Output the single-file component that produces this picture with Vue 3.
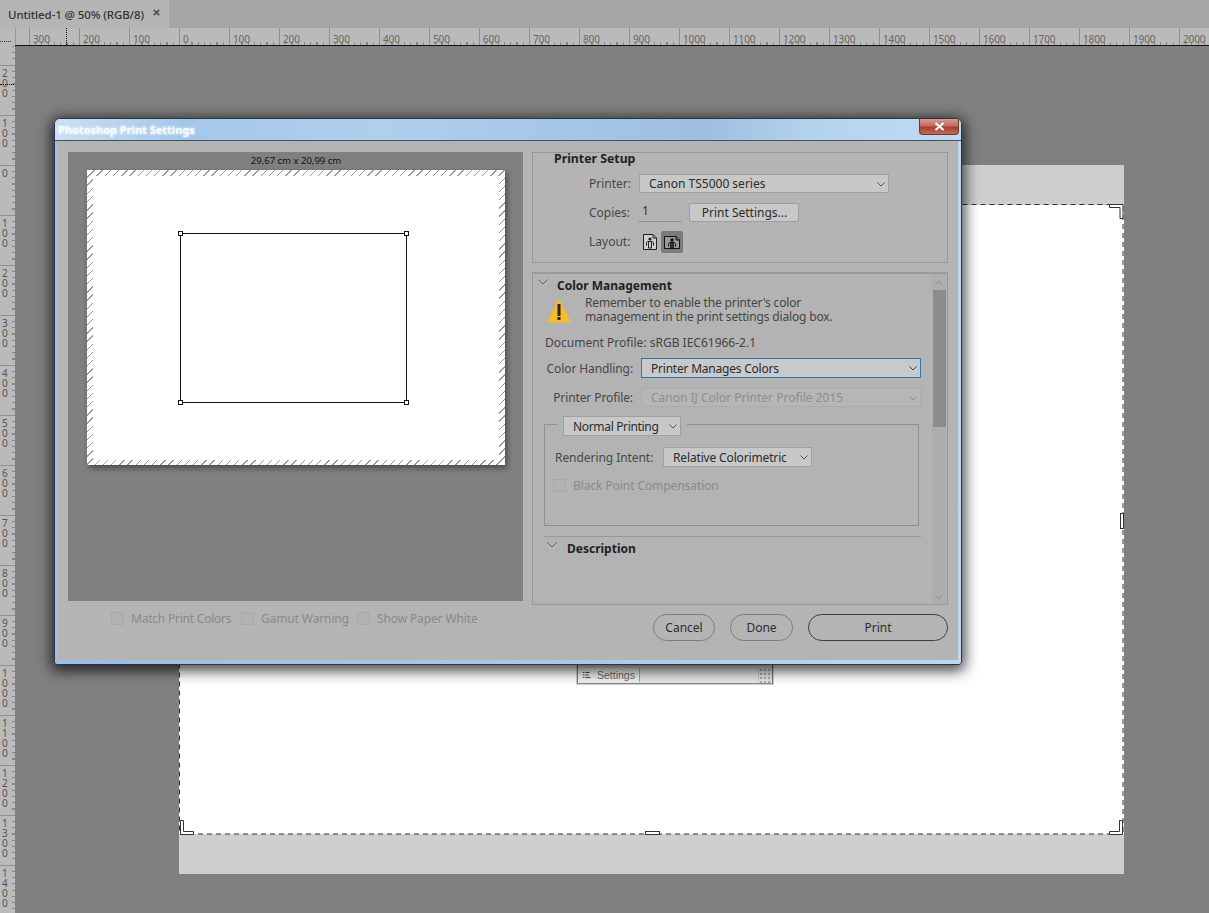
<script setup>
const topMarks = [300, 200, 100, 0, 100, 200, 300, 400, 500, 600, 700, 800, 900, 1000, 1100, 1200, 1300, 1400, 1500, 1600, 1700, 1800, 1900, 2000]
const leftMarks = [200, 100, 0, 100, 200, 300, 400, 500, 600, 700, 800, 900, 1000, 1100, 1200, 1300, 1400]
const digits = (n) => String(n).split('')
const bottomChecks = [
  { label: 'Match Print Colors', width: 100, cls: 'tight-a' },
  { label: 'Gamut Warning', width: 86, cls: 'tight-b' },
  { label: 'Show Paper White', width: 102, cls: 'tight-b' },
]
</script>

<template>
  <div class="app">
    <header class="tabbar">
      <div class="tab">
        <span>Untitled-1 @ 50% (RGB/8)</span>
        <svg class="tab-x" width="7" height="7" viewBox="0 0 7 7"><path d="M.8.800l5.400 5.400M6.200.800L.8 6.200" stroke="#555" stroke-width="1.800" /></svg>
      </div>
    </header>

    <div class="htrack">
      <div class="corner"><i class="corner-dots"></i></div>
      <div class="hruler">
        <div class="hlead"></div>
        <div v-for="(m, i) in topMarks" :key="i" class="hcell">{{ m }}</div>
        <i class="hdots"></i>
      </div>
    </div>

    <div class="workspace">
      <aside class="vruler">
        <div class="vlead"></div>
        <div v-for="(m, i) in leftMarks" :key="i" class="vcell">
          <span v-for="(d, j) in digits(m)" :key="j">{{ d }}</span>
        </div>
        <i class="vdots"></i>
      </aside>
      <main class="canvas"></main>
    </div>

    <section class="doc">
      <svg class="doc-marks" width="945" height="709" viewBox="179 165 945 709">
        <rect x="179" y="205" width="945" height="629" fill="#fff" />
        <rect x="179.5" y="204.5" width="943.5" height="629.5" fill="none" stroke="#333" stroke-dasharray="5 4" />
        <g fill="#fff" stroke="#333">
          <path d="M1109.5 204.5h13.500v14h-3v-11h-10.500z" />
          <path d="M180.500 820.500h3v11h10v3h-13z" />
          <path d="M1122.500 820.500h-3v11h-10v3h13z" />
          <rect x="645.500" y="831.500" width="14" height="3" />
          <rect x="1120.500" y="513.500" width="3" height="15" />
        </g>
      </svg>
    </section>

    <section class="mini-panel">
      <div class="mini-tab">
        <svg width="9" height="6" viewBox="0 0 9 6"><path d="M0 .5h1.500M2.500 .5h4M0 3h1.500M2.500 3h3M0 5.500h1.500M2.500 5.500h5" stroke="#444" /></svg>
        <span>Settings</span>
      </div>
      <div class="mini-grip"></div>
    </section>

    <section class="dialog">
      <div class="titlebar">
        <span class="title">Photoshop Print Settings</span>
        <button class="close">
          <svg width="11" height="9" viewBox="0 0 11 9"><path d="M1.500 1l8 7M9.500 1l-8 7" stroke="#fff" stroke-width="2.200" /></svg>
        </button>
      </div>

      <div class="body">
        <div class="left">
          <div class="preview">
            <div class="size">29,67 cm x 20,99 cm</div>
            <div class="paper">
              <div class="sheet">
                <div class="print-rect">
                  <i class="h tl"></i><i class="h tr"></i><i class="h bl"></i><i class="h br"></i>
                </div>
              </div>
            </div>
          </div>
          <div class="checks">
            <label v-for="c in bottomChecks" :key="c.label" class="check">
              <i class="box"></i>
              <span :class="c.cls" :style="{ width: c.width + 'px' }">{{ c.label }}</span>
            </label>
          </div>
        </div>

        <div class="right">
          <div class="setup">
            <h3 class="setup-title">Printer Setup</h3>
            <div class="row row-printer">
              <span class="row-label">Printer:</span>
              <div class="select printer-select">
                <span>Canon TS5000 series</span>
                <svg class="chev" width="8" height="5" viewBox="0 0 8 5"><path d="M.5.500L4 4 7.500.500" fill="none" stroke="#555" /></svg>
              </div>
            </div>
            <div class="row row-copies">
              <span class="row-label">Copies:</span>
              <div class="copies">1</div>
              <button class="flat-btn">Print Settings...</button>
            </div>
            <div class="row row-layout">
              <span class="row-label lift">Layout:</span>
              <div class="orient">
                <svg width="14" height="16" viewBox="0 0 14 16"><path d="M.5.500h9.500l3.500 3.500v11.500H.5z" fill="#cfcfcf" stroke="#222" /><path d="M10 .5v3.500h3.500" fill="none" stroke="#222" /><circle cx="7" cy="5" r="1.600" fill="#222" /><path d="M3.500 11.500V8.500l1-1h5l1 1v3M5.500 14V8M8.500 14V8M5.500 14h3" fill="none" stroke="#222" /></svg>
              </div>
              <div class="orient active">
                <svg width="16" height="13" viewBox="0 0 16 13"><path d="M.5.500h11.500l3.500 3.500v8.500H.5z" fill="#9a9a9a" stroke="#111" /><path d="M12 .5v3.500h3.500" fill="none" stroke="#111" /><circle cx="8" cy="4" r="1.700" fill="#111" /><path d="M4.500 10.500V7.500l1-1h5l1 1v3M6.500 12V7M9.500 12V7" fill="none" stroke="#111" /><path d="M6.500 7h3v5h-3z" fill="#333" /></svg>
              </div>
            </div>
          </div>

          <div class="color">
            <div class="color-content">
              <div class="section-head">
                <svg class="fold" width="10" height="6" viewBox="0 0 10 6"><path d="M.5.500L5 5 9.500.500" fill="none" stroke="#666" /></svg>
                <h3>Color Management</h3>
              </div>
              <div class="warn">
                <svg width="24" height="24" viewBox="0 0 24 24">
                  <path d="M12 1.500L22.500 22.500H1.500z" fill="#f4bb2d" stroke="#f4bb2d" stroke-linejoin="round" stroke-width="2" />
                  <rect x="10.500" y="5" width="3" height="12" fill="#2b2418" />
                  <rect x="10.500" y="18" width="3" height="3" fill="#2b2418" />
                </svg>
                <p>Remember to enable the printer's color<br />management in the print settings dialog box.</p>
              </div>
              <div class="doc-profile">Document Profile: sRGB IEC61966-2.1</div>
              <div class="form-row handling">
                <span class="form-label">Color Handling:</span>
                <div class="select focus">
                  <span>Printer Manages Colors</span>
                  <svg class="chev" width="8" height="5" viewBox="0 0 8 5"><path d="M.5.500L4 4 7.500.500" fill="none" stroke="#444" /></svg>
                </div>
              </div>
              <div class="form-row profile">
                <span class="form-label">Printer Profile:</span>
                <div class="select disabled">
                  <span>Canon IJ Color Printer Profile 2015</span>
                  <svg class="chev" width="8" height="5" viewBox="0 0 8 5"><path d="M.5.500L4 4 7.500.500" fill="none" stroke="#8d8d8d" /></svg>
                </div>
              </div>
              <fieldset class="group">
                <div class="legend">
                  <div class="select normal">
                    <span>Normal Printing</span>
                    <svg class="chev" width="8" height="5" viewBox="0 0 8 5"><path d="M.5.500L4 4 7.500.500" fill="none" stroke="#555" /></svg>
                  </div>
                </div>
                <div class="intent">
                  <span class="intent-label">Rendering Intent:</span>
                  <div class="select intent-select">
                    <span>Relative Colorimetric</span>
                    <svg class="chev" width="8" height="5" viewBox="0 0 8 5"><path d="M.5.500L4 4 7.500.500" fill="none" stroke="#555" /></svg>
                  </div>
                </div>
                <label class="bpc">
                  <i class="box"></i>
                  <span>Black Point Compensation</span>
                </label>
              </fieldset>
              <div class="divider"></div>
              <div class="section-head desc">
                <svg class="fold" width="10" height="6" viewBox="0 0 10 6"><path d="M.5.500L5 5 9.500.500" fill="none" stroke="#666" /></svg>
                <h3>Description</h3>
              </div>
            </div>
            <div class="scrollbar">
              <svg width="8" height="5" viewBox="0 0 8 5"><path d="M.5 4.500L4 1l3.500 3.500" fill="none" stroke="#8a8a8a" /></svg>
              <div class="thumb"></div>
              <div class="track"></div>
              <svg width="8" height="5" viewBox="0 0 8 5"><path d="M.5.500L4 4 7.500.500" fill="none" stroke="#8a8a8a" /></svg>
            </div>
          </div>

          <div class="actions">
            <button class="pill cancel">Cancel</button>
            <button class="pill done">Done</button>
            <button class="pill print">Print</button>
          </div>
        </div>
      </div>
    </section>
  </div>
</template>

<style>
html, body { margin: 0; overflow: hidden; }
</style>

<style scoped>
.app {
  position: relative;
  width: 1209px;
  height: 913px;
  overflow: hidden;
  display: flex;
  flex-direction: column;
  background: #808080;
  font-family: "Noto Sans", "Open Sans", sans-serif;
  font-size: 12px;
  color: #2e2e2e;
}
h3, p, fieldset { margin: 0; padding: 0; }
button { font: inherit; color: inherit; padding: 0; }

.tabbar { height: 28px; flex: none; background: #a5a5a5; }
.tab {
  width: 169px; height: 28px; background: #b5b5b5; display: flex; align-items: center;
  padding-left: 8px; box-sizing: border-box; color: #333; font-size: 11.500px; letter-spacing: -.1px; gap: 9px;
  white-space: nowrap; font-weight: 500;
}
.tab-x { flex: none; margin-bottom: 3px; }

.htrack { height: 18px; flex: none; display: flex; background: #bababa; }
.corner { width: 15px; flex: none; position: relative; }
.corner-dots { position: absolute; left: 0; top: 13px; width: 11px; border-top: 1px dotted #333; }
.hruler {
  flex: 1; display: flex; position: relative; overflow: hidden; box-sizing: border-box;
  border-bottom: 1px solid #111; color: #666; font-size: 10px; line-height: 12px;
  background: repeating-linear-gradient(90deg, #888 0 1px, transparent 1px 6.25px) 14px 100% / 100% 3px no-repeat;
}
.hlead { width: 14px; flex: none; border-left: 1px solid #999; box-sizing: border-box; }
.hcell { width: 50px; flex: none; box-sizing: border-box; border-left: 1px solid #909090; padding: 5px 0 0 3px; letter-spacing: -.1px; }
.hdots { position: absolute; left: 51px; top: 0; height: 17px; border-left: 1px dotted #111; }

.workspace { flex: 1; display: flex; min-height: 0; }
.vruler {
  width: 15px; flex: none; overflow: hidden; position: relative; color: #555;
  font-size: 10px; line-height: 10px; background-color: #bababa;
  background-image: repeating-linear-gradient(180deg, #888 0 1px, transparent 1px 6.25px);
  background-size: 3px 100%;
  background-position: 100% 0;
  background-repeat: no-repeat;
}
.vlead { height: 19px; }
.vcell {
  height: 50px; box-sizing: border-box; border-top: 1px solid #909090; padding: 2px 0 0 2px;
  display: flex; flex-direction: column;
}
.vdots { position: absolute; left: 0; top: 38px; width: 14px; border-top: 1px dotted #111; }
.canvas { flex: 1; background: #808080; }

.doc { position: absolute; left: 179px; top: 165px; width: 945px; height: 709px; background: #cecece; }
.doc-marks { display: block; }

.mini-panel {
  position: absolute; left: 577px; top: 650px; width: 196px; height: 34px; box-sizing: border-box;
  display: flex; align-items: flex-end; background: #e7e7e7; border: 1px solid #7a7a7a; border-bottom-color: #8c8c8c;
  box-shadow: 0 0 0 1px #d0d0d0;
  font-family: "Liberation Sans", sans-serif; font-size: 10.500px; color: #666;
}
.mini-tab {
  width: 62px; height: 14px; display: flex; align-items: center; gap: 5px; box-sizing: border-box;
  padding-left: 5px; border-right: 1px solid #aaa; margin-bottom: 1px; background: #f2f2f2;
}
.mini-grip {
  width: 13px; height: 15px; margin-left: auto; border-left: 1px solid #ccc;
  background: radial-gradient(#aaa 0 1px, transparent 1px) 0 0 / 4px 4px;
}

.dialog {
  position: absolute; left: 54px; top: 118px; width: 908px; height: 547px; box-sizing: border-box;
  padding: 1px 3px 4px; border-radius: 6px 6px 3px 3px; border: 1px solid #2d3540;
  background: linear-gradient(90deg, #9bbfe2, #a9cbea 60%, #bcd8f0);
  box-shadow: 0 3px 14px 3px rgba(0, 0, 0, .72);
  display: flex; flex-direction: column;
}
.titlebar {
  height: 21px; flex: none; margin: -1px -3px 0; padding-left: 3px; position: relative;
  display: flex; align-items: center; border-bottom: 1px solid #3d5268;
  background: linear-gradient(90deg, #cbe0f4 0, #a4c7e9 14%, #b0cfed 36%, #a3c5e7 58%, #9ebfe1 72%, #b6d3ee 84%, #c0daf2 100%);
  border-radius: 5px 5px 0 0;
}
.title { color: #f6fafd; font-weight: 700; font-size: 11px; text-shadow: 0 0 3px #fff; }
.close {
  position: absolute; right: 2px; top: 0; width: 40px; height: 16px; border: 1px solid #5e3c38;
  border-top: 0; border-radius: 0 0 4px 4px; display: flex; align-items: center; justify-content: center;
  background: linear-gradient(180deg, #d69c92 0, #c66a5c 45%, #a8412f 55%, #c46a58 100%);
}

.body {
  flex: 1; display: flex; gap: 9px; padding: 11px 10px 0; background: #b4b4b4; min-height: 0;
}
.left { width: 455px; flex: none; }
.preview { height: 449px; background: #808080; box-sizing: border-box; padding: 0 0 0 19px; }
.size { height: 18px; line-height: 17px; font-size: 9.500px; color: #111; width: 418px; text-align: center; }
.paper {
  width: 418px; height: 295px; box-sizing: border-box; padding: 6px 6px 5px;
  background: repeating-linear-gradient(135deg, #fff 0 4.800px, #9a9a9a 4.800px 5.800px);
  box-shadow: 2px 3px 6px rgba(0, 0, 0, .45);
}
.sheet { height: 100%; background: #fff; padding: 57px 0 0 87px; box-sizing: border-box; }
.print-rect { width: 227px; height: 170px; box-sizing: border-box; border: 1px solid #111; position: relative; }
.h { position: absolute; width: 5px; height: 5px; background: #fff; border: 1px solid #111; box-sizing: border-box; }
.tl { left: -3px; top: -3px; } .tr { right: -3px; top: -3px; }
.bl { left: -3px; bottom: -3px; } .br { right: -3px; bottom: -3px; }

.checks { display: flex; margin-top: 10px; padding-left: 43px; gap: 10px; font-size: 12px; color: #8a8a8a; }
.check { display: flex; align-items: center; height: 15px; white-space: nowrap; }
.check .box { margin-right: 7px; }
.tight-a { letter-spacing: -.22px; }
.tight-b { letter-spacing: -.12px; }
.box { display: block; flex: none; width: 13px; height: 13px; box-sizing: border-box; border: 1px solid #a9a9a9; background: #b2b2b2; }

.right { width: 416px; flex: none; }
.setup { height: 111px; box-sizing: border-box; border: 1px solid #989898; }
.setup-title { height: 21px; padding-left: 21px; font-size: 12.300px; line-height: 12px; font-weight: 700; color: #222; }
.row { display: flex; align-items: center; padding-left: 56px; color: #474747; white-space: nowrap; }
.row-label { width: 50px; flex: none; }
.row-label.lift { margin-top: -2px; }
.row-printer { height: 19px; }
.row-copies { height: 19px; margin-top: 10px; }
.row-layout { height: 22px; margin-top: 9px; }
.select {
  position: relative; display: flex; align-items: center; box-sizing: border-box; padding-left: 9px;
  background: #c8c8c8; border: 1px solid #a0a0a0; color: #2b2b2b; white-space: nowrap;
}
.chev { position: absolute; right: 3px; top: 50%; margin-top: -2px; }
.printer-select { width: 250px; height: 19px; }
.copies {
  width: 42px; height: 19px; box-sizing: border-box; padding-left: 3px; border-bottom: 1px solid #8b8b8b;
  color: #333; line-height: 15px;
}
.flat-btn {
  margin-left: 8px; width: 110px; height: 19px; border: 1px solid #a0a0a0; background: #c8c8c8;
  color: #2b2b2b; display: flex; align-items: center; justify-content: center; padding-left: 1px;
}
.orient { width: 22px; height: 22px; display: flex; align-items: center; justify-content: center; border-radius: 2px; }
.orient.active { background: #7b7b7b; }

.color {
  height: 333px; margin-top: 9px; box-sizing: border-box; display: flex;
  border: 1px solid #989898; border-top: 2px solid #9a9a9a; background: #b3b3b3;
}
.color-content { flex: 1; min-width: 0; padding: 4px 0 0 11px; }
.section-head { height: 14px; display: flex; align-items: center; position: relative; }
.section-head h3 { font-size: 12px; font-weight: 700; color: #222; white-space: nowrap; padding-left: 13px; }
.fold { position: absolute; left: -6px; top: 1px; }
.section-head.desc h3 { padding-left: 23px; }
.section-head.desc .fold { left: 3px; top: 1px; }
.warn { display: flex; margin-top: 4px; height: 28px; color: #454545; line-height: 14px; white-space: nowrap; letter-spacing: -.16px; }
.warn svg { margin: 3px 14px 0 3px; flex: none; }
.doc-profile { margin-top: 12px; height: 14px; line-height: 14px; color: #454545; padding-left: 1px; }
.form-row { display: flex; align-items: center; width: 377px; }
.form-label { width: 89px; flex: none; text-align: right; margin-right: 8px; color: #474747; white-space: nowrap; letter-spacing: -.1px; }
.handling { margin-top: 8px; height: 20px; }
.profile { margin-top: 10px; height: 19px; }
.select.focus { width: 280px; height: 20px; border-color: #2f74c0; background: #c9c9c9; letter-spacing: -.22px; }
.select.disabled { width: 280px; height: 19px; background: #b6b6b6; border-color: #ababab; color: #8e8e8e; }
.group {
  margin-top: 17px; width: 375px; height: 102px; box-sizing: border-box; border: 1px solid #8f8f8f; position: relative;
}
.legend {
  width: 130px; box-sizing: border-box; margin: -9px 0 0 12px; padding: 0 6px; background: #b3b3b3;
}
.select.normal { width: 118px; height: 20px; letter-spacing: -.33px; }
.intent { display: flex; align-items: center; margin-top: 11px; padding-left: 10px; color: #474747; }
.intent-label { width: 108px; flex: none; white-space: nowrap; letter-spacing: -.06px; }
.select.intent-select { width: 149px; height: 20px; letter-spacing: -.15px; }
.bpc { display: flex; align-items: center; margin-top: 11px; padding-left: 8px; color: #8a8a8a; white-space: nowrap; height: 14px; letter-spacing: -.08px; }
.bpc .box { margin-right: 7px; border-color: #a8a8a8; }
.divider { width: 377px; margin-top: 10px; border-top: 1px solid #999; }
.desc { margin-top: 4px; }

.scrollbar {
  width: 14px; flex: none; margin: 0 1px 0 0; display: flex; flex-direction: column; align-items: center;
  background: #aeaeae; padding: 6px 0 4px; box-sizing: border-box;
}
.scrollbar .thumb { width: 13px; height: 137px; background: #8d8d8d; margin-top: 5px; flex: none; }
.scrollbar .track { flex: 1; }

.actions { display: flex; justify-content: flex-end; gap: 15px; margin-top: 9px; }
.pill {
  height: 27px; border-radius: 14px; border: 1px solid #7c7c7c; background: transparent;
  color: #2e2e2e; display: flex; align-items: center; justify-content: center;
}
.cancel { width: 62px; }
.done { width: 63px; }
.print { width: 140px; border-color: #3e3e3e; }
</style>
